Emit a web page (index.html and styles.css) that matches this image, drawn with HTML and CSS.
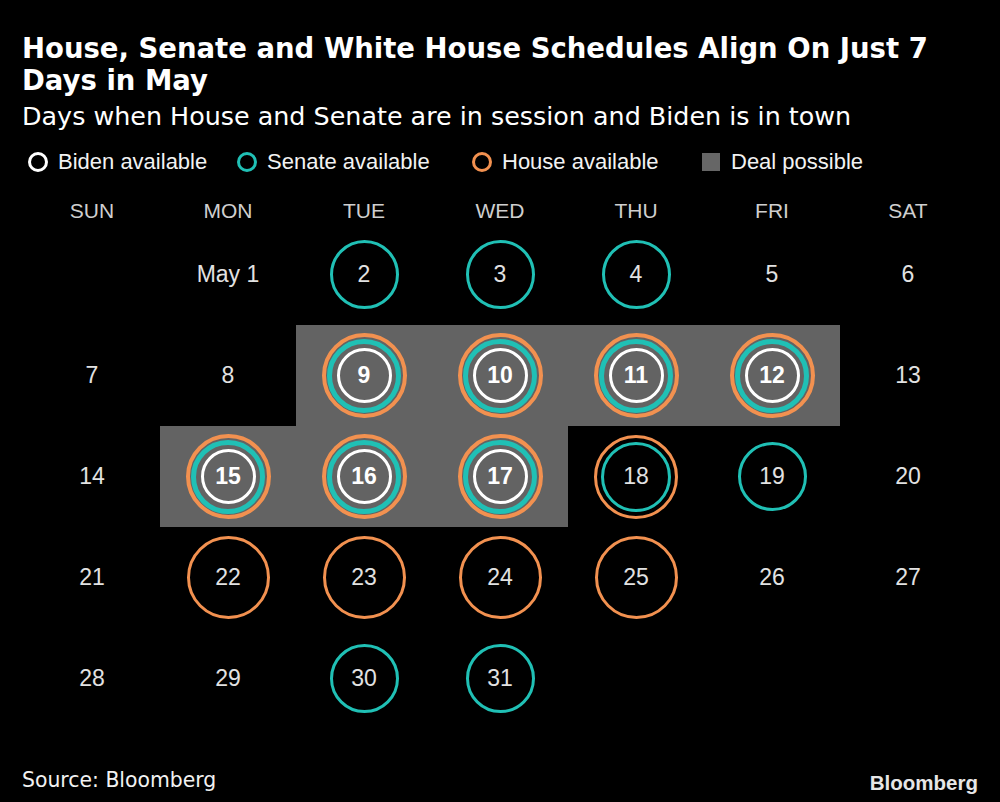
FILE: index.html
```html
<!DOCTYPE html>
<html lang="en">
<head>
<meta charset="utf-8">
<title>House, Senate and White House Schedules</title>
<link rel="stylesheet" href="styles.css">
</head>
<body>
<div class="chart">
  <h1 class="title">House, Senate and White House Schedules Align On Just 7 Days in May</h1>
  <p class="subtitle">Days when House and Senate are in session and Biden is in town</p>

  <div class="legend">
    <div class="legend-item"><span class="swatch-ring biden"></span>Biden available</div>
    <div class="legend-item"><span class="swatch-ring senate"></span>Senate available</div>
    <div class="legend-item"><span class="swatch-ring house"></span>House available</div>
    <div class="legend-item deal-item"><span class="swatch-box"></span>Deal possible</div>
  </div>

  <div class="weekdays">
    <div>SUN</div><div>MON</div><div>TUE</div><div>WED</div><div>THU</div><div>FRI</div><div>SAT</div>
  </div>

  <div class="calendar">
    <!-- week 1 -->
    <div class="cell"></div>
    <div class="cell"><span class="num">May 1</span></div>
    <div class="cell"><div class="ring teal"><span class="num">2</span></div></div>
    <div class="cell"><div class="ring teal"><span class="num">3</span></div></div>
    <div class="cell"><div class="ring teal"><span class="num">4</span></div></div>
    <div class="cell"><span class="num">5</span></div>
    <div class="cell"><span class="num">6</span></div>
    <!-- week 2 -->
    <div class="cell"><span class="num">7</span></div>
    <div class="cell"><span class="num">8</span></div>
    <div class="cell deal"><div class="ring-o"><div class="ring-t"><div class="ring-w"><span class="num bold">9</span></div></div></div></div>
    <div class="cell deal"><div class="ring-o"><div class="ring-t"><div class="ring-w"><span class="num bold">10</span></div></div></div></div>
    <div class="cell deal"><div class="ring-o"><div class="ring-t"><div class="ring-w"><span class="num bold">11</span></div></div></div></div>
    <div class="cell deal"><div class="ring-o"><div class="ring-t"><div class="ring-w"><span class="num bold">12</span></div></div></div></div>
    <div class="cell"><span class="num">13</span></div>
    <!-- week 3 -->
    <div class="cell"><span class="num">14</span></div>
    <div class="cell deal"><div class="ring-o"><div class="ring-t"><div class="ring-w"><span class="num bold">15</span></div></div></div></div>
    <div class="cell deal"><div class="ring-o"><div class="ring-t"><div class="ring-w"><span class="num bold">16</span></div></div></div></div>
    <div class="cell deal"><div class="ring-o"><div class="ring-t"><div class="ring-w"><span class="num bold">17</span></div></div></div></div>
    <div class="cell"><div class="ring orange-out"><div class="ring teal inner"><span class="num">18</span></div></div></div>
    <div class="cell"><div class="ring teal"><span class="num">19</span></div></div>
    <div class="cell"><span class="num">20</span></div>
    <!-- week 4 -->
    <div class="cell"><span class="num">21</span></div>
    <div class="cell"><div class="ring orange"><span class="num">22</span></div></div>
    <div class="cell"><div class="ring orange"><span class="num">23</span></div></div>
    <div class="cell"><div class="ring orange"><span class="num">24</span></div></div>
    <div class="cell"><div class="ring orange"><span class="num">25</span></div></div>
    <div class="cell"><span class="num">26</span></div>
    <div class="cell"><span class="num">27</span></div>
    <!-- week 5 -->
    <div class="cell"><span class="num">28</span></div>
    <div class="cell"><span class="num">29</span></div>
    <div class="cell"><div class="ring teal"><span class="num">30</span></div></div>
    <div class="cell"><div class="ring teal"><span class="num">31</span></div></div>
    <div class="cell"></div>
    <div class="cell"></div>
    <div class="cell"></div>
  </div>

  <div class="footer">
    <span class="source">Source: Bloomberg</span>
    <span class="logo">Bloomberg</span>
  </div>
</div>
</body>
</html>
```

FILE: styles.css
```css
html, body {
  margin: 0;
  padding: 0;
  background: #000;
}

body {
  width: 1000px;
  height: 802px;
  overflow: hidden;
  color: #fff;
}

.chart {
  padding: 32px 22px 0 22px;
}

.title {
  margin: 0;
  font-family: "DejaVu Sans", sans-serif;
  font-weight: bold;
  font-size: 27.5px;
  line-height: 32px;
  color: #fff;
}

.subtitle {
  margin: 5px 0 0 0;
  font-family: "DejaVu Sans", sans-serif;
  font-size: 25.4px;
  line-height: 30px;
  color: #fff;
}

.legend {
  margin-top: 16px;
  height: 30px;
  padding-left: 6px;
  display: grid;
  grid-template-columns: 209px 235px 230px auto;
  align-items: center;
  font-family: "Liberation Sans", Arial, sans-serif;
  font-size: 22px;
  color: #f2f2f2;
}

.legend-item {
  display: flex;
  align-items: center;
  gap: 10px;
  white-space: nowrap;
}

.deal-item {
  gap: 11px;
}

.swatch-ring {
  width: 20px;
  height: 20px;
  box-sizing: border-box;
  border: 3px solid #fff;
  border-radius: 50%;
}

.swatch-ring.biden { border-color: #ffffff; }
.swatch-ring.senate { border-color: #20c0b5; }
.swatch-ring.house { border-color: #f29150; }

.swatch-box {
  width: 18px;
  height: 18px;
  background: #666666;
}

.weekdays {
  margin-top: 21px;
  margin-left: 2px;
  height: 26px;
  display: grid;
  grid-template-columns: repeat(7, 136px);
  align-items: center;
  justify-items: center;
  font-family: "Liberation Sans", Arial, sans-serif;
  font-size: 21px;
  color: #cfcfcf;
}

.calendar {
  margin-left: 2px;
  display: grid;
  grid-template-columns: repeat(7, 136px);
  grid-template-rows: repeat(5, 101px);
}

.cell {
  display: flex;
  align-items: center;
  justify-content: center;
}

.cell.deal {
  background: #636363;
}

.num {
  font-family: "Liberation Sans", Arial, sans-serif;
  font-size: 23px;
  color: #e2e2e2;
  white-space: nowrap;
}

.num.bold {
  font-weight: bold;
  color: #fff;
}

.ring {
  box-sizing: border-box;
  border-radius: 50%;
  display: flex;
  align-items: center;
  justify-content: center;
}

.ring.teal {
  width: 69px;
  height: 69px;
  border: 3px solid #20c0b5;
}

.ring.orange {
  width: 83px;
  height: 83px;
  border: 3px solid #f29150;
}

.ring.orange-out {
  width: 84px;
  height: 84px;
  border: 3px solid #f29150;
}

.ring.teal.inner {
  width: 70px;
  height: 70px;
}

.ring-o, .ring-t, .ring-w {
  box-sizing: border-box;
  border-radius: 50%;
  display: flex;
  align-items: center;
  justify-content: center;
}

.ring-o {
  width: 85px;
  height: 85px;
  border: 4px solid #f29150;
}

.ring-t {
  width: 74px;
  height: 74px;
  border: 5px solid #20c0b5;
}

.ring-w {
  width: 55px;
  height: 55px;
  border: 3.5px solid #ffffff;
}

.footer {
  margin-top: 39px;
  display: flex;
  justify-content: space-between;
  align-items: flex-start;
}

.source {
  font-family: "DejaVu Sans", sans-serif;
  font-size: 20.4px;
  line-height: 24px;
  color: #f2f2f2;
}

.logo {
  margin-top: 3px;
  font-family: "Liberation Sans", Arial, sans-serif;
  font-weight: bold;
  font-size: 20.5px;
  line-height: 24px;
  color: #e6e6e6;
}
```
